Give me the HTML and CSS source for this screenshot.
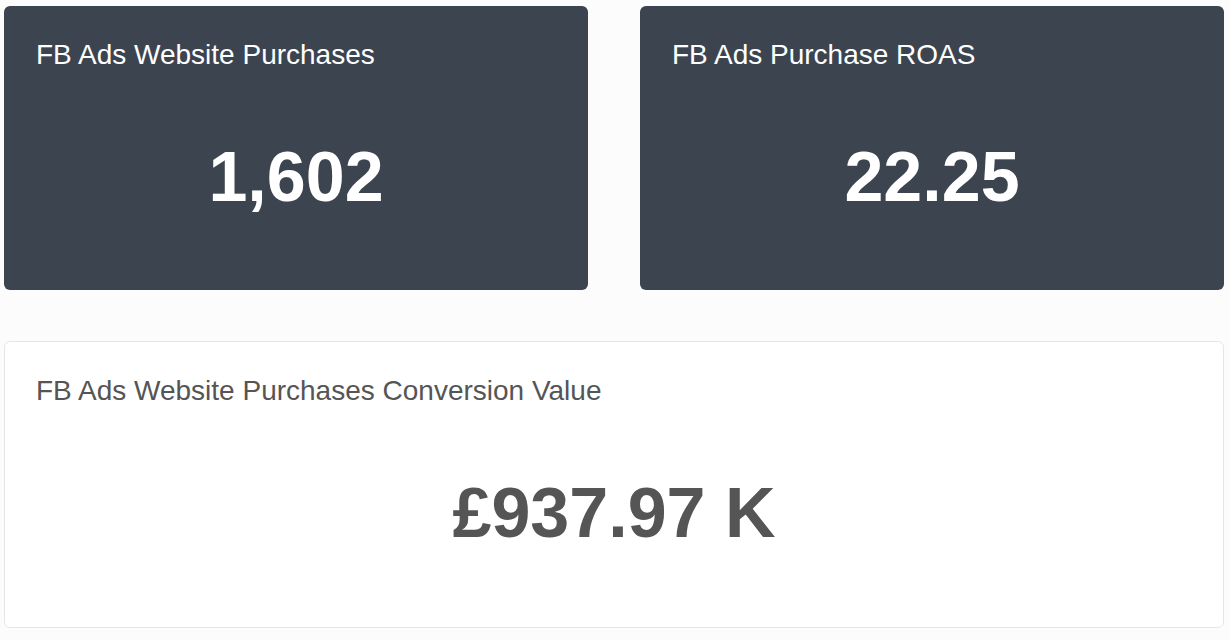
FILE: index.html
```html
<!DOCTYPE html>
<html lang="en">
<head>
<meta charset="UTF-8" />
<title>FB Ads KPIs</title>
<link rel="stylesheet" href="styles.css">
</head>
<body>
  <div class="grid">
    <div class="card dark">
      <div class="card-title">FB Ads Website Purchases</div>
      <div class="card-value">1,602</div>
    </div>
    <div class="card dark">
      <div class="card-title">FB Ads Purchase ROAS</div>
      <div class="card-value">22.25</div>
    </div>
    <div class="card light wide">
      <div class="card-title">FB Ads Website Purchases Conversion Value</div>
      <div class="card-value">£937.97 K</div>
    </div>
  </div>
</body>
</html>
```

FILE: styles.css
```css
* {
  box-sizing: border-box;
}
body {
  margin: 0;
  padding: 6px 5px 0 4px;
  background: #fcfcfc;
  font-family: "Liberation Sans", Arial, Helvetica, sans-serif;
}
.grid {
  display: grid;
  grid-template-columns: 584px 584px;
  column-gap: 52px;
  row-gap: 51px;
}
.card {
  border-radius: 6px;
  padding: 34px 32px 78px;
}
.card.dark {
  background: #3c4450;
  color: #fff;
}
.card.light {
  background: #fff;
  color: #555;
  border: 1px solid #e6e6ea;
  padding: 34px 31px 79px;
}
.wide {
  grid-column: 1 / 3;
}
.card-title {
  font-size: 28px;
  line-height: 30px;
}
.card-value {
  margin-top: 72px;
  font-size: 70px;
  line-height: 70px;
  font-weight: bold;
  text-align: center;
}
```
